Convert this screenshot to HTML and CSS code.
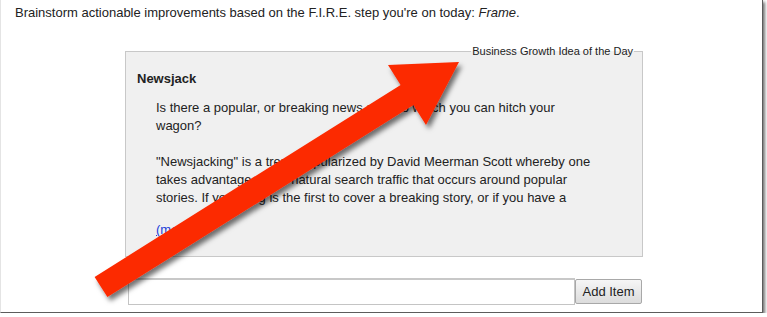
FILE: index.html
```html
<!DOCTYPE html>
<html>
<head>
  <title>Business Growth Idea</title>
  <meta name="viewport" content="width=device-width, initial-scale=1">
  <link rel="stylesheet" href="styles.css">
</head>
<body>
  <div class="window">
    <p class="intro">Brainstorm actionable improvements based on the F.I.R.E. step you're on today: <em>Frame</em>.</p>

    <div class="panel">
      <fieldset class="idea">
        <legend>Business Growth Idea of the Day</legend>
        <h3 class="idea-title">Newsjack</h3>
        <div class="idea-body">
          <p>Is there a popular, or breaking news story to which you can hitch your wagon?</p>
          <p>"Newsjacking" is a trend popularized by David Meerman Scott whereby one takes advantage of the natural search traffic that occurs around popular stories. If your blog is the first to cover a breaking story, or if you have a</p>
        </div>
        <a href="#" class="more">(more...)</a>
      </fieldset>

      <form class="add-form">
        <input type="text" class="add-input">
        <button type="button" class="add-btn">Add Item</button>
      </form>
    </div>

    <!-- annotation arrow drawn over the page -->
    <svg class="arrow" width="767" height="317" viewBox="0 0 767 317">
      <defs>
        <filter id="shadow" x="-10%" y="-10%" width="130%" height="130%">
          <feDropShadow dx="3" dy="4" stdDeviation="2.5" flood-color="#000" flood-opacity="0.55"/>
        </filter>
      </defs>
      <polygon filter="url(#shadow)" fill="#fc2a03"
        points="93.6,276.9 399.6,84.9 387,65 458,62 425,125 412.4,105.1 106.4,297.1"/>
    </svg>
  </div>
</body>
</html>
```

FILE: styles.css
```css
body {
  margin: 0;
  background-color: #fff;
  font-family: "Liberation Sans", Arial, sans-serif;
  font-size: 13px;
  color: #222;
}
/* Screenshot frame */
.window {
  position: relative;
  box-sizing: border-box;
  width: 763px;
  height: 313px;
  padding: 5px 15px 0 14px;
  border-left: 1px solid #e4e4e4;
  border-right: 1px solid #5c5c5c;
  border-bottom: 1px solid #5c5c5c;
  box-shadow: 2px 2px 3px rgba(0, 0, 0, 0.55);
  background-color: #fff;
}
.intro {
  margin: 0;
  line-height: 16px;
}
/* Idea box */
.panel {
  width: 518px;
  margin: 24px 0 0 110px;
}
.idea {
  margin: 0;
  padding: 0 0 17px 0;
  border: 1px solid #c8c8c8;
  background-color: #f0f0f0;
}
.idea legend {
  margin-left: auto;
  margin-right: 8px;
  padding: 0 1px;
  font-size: 11px;
  line-height: 13px;
  color: #222;
}
.idea-title {
  margin: 13px 0 0 11px;
  font-size: 13px;
  line-height: 16px;
}
.idea-body {
  margin: 12px 0 0 30px;
  width: 440px;
  line-height: 18px;
}
.idea-body p {
  margin: 0 0 18px 0;
}
.idea-body p:last-child {
  margin-bottom: 0;
}
.more {
  display: block;
  margin: 14px 0 0 30px;
  line-height: 18px;
  color: #1a3fd8;
}
/* Add item row */
.add-form {
  display: flex;
  align-items: center;
  margin: 21px 0 0 3px;
}
.add-input {
  box-sizing: border-box;
  width: 447px;
  height: 27px;
  margin: 0;
  border: 1px solid #c4c4c4;
  border-top: 2px solid #c8c8c8;
  background-color: #fff;
}
.add-btn {
  box-sizing: border-box;
  width: 67px;
  height: 25px;
  margin: 0;
  padding: 0;
  border: 1px solid #a8a8a8;
  border-radius: 2px;
  background: linear-gradient(#f6f6f6, #dcdcdc);
  font-family: "Liberation Sans", Arial, sans-serif;
  font-size: 13px;
  color: #222;
}
.arrow {
  position: absolute;
  left: 0;
  top: 0;
  pointer-events: none;
}
```
